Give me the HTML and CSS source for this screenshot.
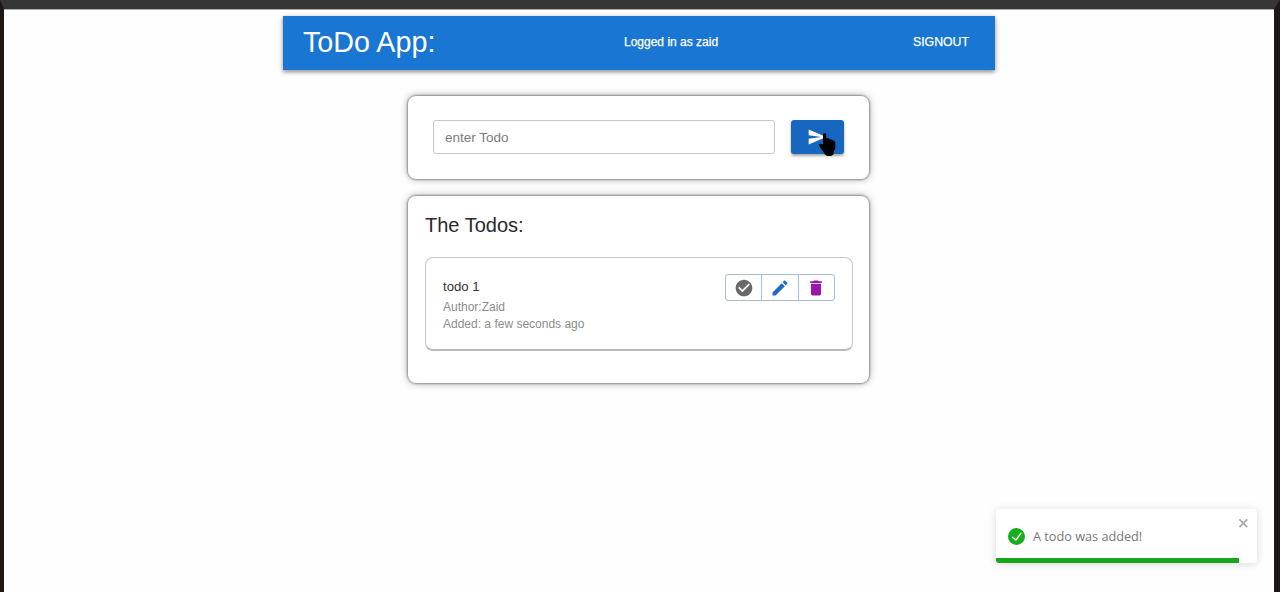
FILE: index.html
```html
<!DOCTYPE html>
<html lang="en">
<head>
<meta charset="utf-8">
<title>ToDo App</title>
<link rel="stylesheet" href="styles.css">
</head>
<body>
<div class="page">
  <header class="appbar">
    <h1 class="brand">ToDo App:</h1>
    <span class="user">Logged in as zaid</span>
    <button class="signout">SIGNOUT</button>
  </header>
  <main class="content">
    <form class="panel entry">
      <input class="field" type="text" placeholder="enter Todo">
      <button class="send" type="button" aria-label="Add">
        <svg class="send-icon" viewBox="0 0 24 24"><path d="M2 21 23 12 2 3v7l15 2-15 2z"/></svg>
        <svg class="pointer" viewBox="0 0 17 23"><path d="M4 1.500C4.300-.3 7-.3 7.200 1.500V5l2 .2 1.500 1 2 .2 1.300 1.200 1.500.5.8 1.400v6l-1.600 3v2.500L12.500 23H8l-2-1.500L4.500 19 1 14.500 0 12c.5-1.500 2.500-1.500 4-.3z"/></svg>
      </button>
    </form>
    <section class="panel list">
      <h2 class="heading">The Todos:</h2>
      <article class="todo">
        <div class="info">
          <div class="title">todo 1</div>
          <div class="meta">Author:Zaid</div>
          <div class="meta">Added: a few seconds ago</div>
        </div>
        <div class="actions">
          <button class="action done" aria-label="Done"><svg viewBox="0 0 24 24"><path d="M12 2C6.480 2 2 6.480 2 12s4.480 10 10 10 10-4.480 10-10S17.520 2 12 2zm-2 15-5-5 1.410-1.410L10 14.170l7.590-7.590L19 8l-9 9z"/></svg></button>
          <button class="action edit" aria-label="Edit"><svg viewBox="0 0 24 24"><path d="M3 17.250V21h3.750L17.810 9.940l-3.750-3.750L3 17.250zM20.710 7.040c.39-.39.39-1.020 0-1.410l-2.340-2.340c-.39-.39-1.020-.39-1.410 0l-1.830 1.830 3.750 3.750 1.830-1.830z"/></svg></button>
          <button class="action remove" aria-label="Delete"><svg viewBox="0 0 24 24"><path d="M6 19c0 1.100.9 2 2 2h8c1.100 0 2-.9 2-2V7H6v12zM19 4h-3.500l-1-1h-5l-1 1H5v2h14V4z"/></svg></button>
        </div>
      </article>
    </section>
  </main>
  <aside class="toast">
    <svg class="toast-icon" viewBox="0 0 24 24"><path d="M12 0a12 12 0 1012 12A12.014 12.014 0 0012 0zm6.927 8.200l-6.845 9.289a1.011 1.011 0 01-1.430.188l-4.888-3.908a1 1 0 111.250-1.562l4.076 3.261 6.227-8.451a1 1 0 111.610 1.183z"/></svg>
    <span class="toast-text">A todo was added!</span>
    <svg class="close" viewBox="0 0 14 16"><path d="M7.710 8.230l3.750 3.750-1.480 1.480-3.750-3.750-3.750 3.750L1 11.980l3.750-3.750L1 4.480 2.480 3l3.750 3.750L9.980 3l1.480 1.480-3.750 3.750z"/></svg>
    <div class="progress"></div>
  </aside>
</div>
</body>
</html>
```
FILE: styles.css
```css
* { box-sizing: border-box; }
body {
  margin: 0;
  background: #fefefe;
  font-family: "Liberation Sans", Arial, sans-serif;
}
button { font-family: inherit; cursor: pointer; }
.page {
  position: relative;
  height: 592px;
  overflow: hidden;
  border-top: 9px solid #363636;
  border-left: 4px solid #1e1815;
  border-right: 6px solid #1e1617;
  box-shadow: inset 0 1px 0 #aaa;
  padding-top: 7px;
}
.appbar {
  display: flex;
  align-items: center;
  width: 712px;
  height: 54px;
  margin-left: 279px;
  padding: 0 26px 2px 20px;
  background: #1976d2;
  color: #fff;
  box-shadow: 0 2px 4px rgba(0,0,0,.35), 0 1px 6px rgba(0,0,0,.15);
}
.brand { width: 321px; margin: 0; font-size: 28.700px; font-weight: 400; white-space: nowrap; }
.user { font-size: 12px; -webkit-text-stroke: .25px #fff; }
.signout { margin-left: auto; padding: 0; border: 0; background: none; color: #fff; font-size: 12.300px; -webkit-text-stroke: .25px #fff; }
.content {
  display: flex;
  flex-direction: column;
  gap: 17px;
  width: 461px;
  margin: 26px 0 0 404px;
}
.panel {
  background: #fff;
  border-radius: 8px;
  box-shadow: 0 0 2px 1px rgba(0,0,0,.34), 0 0 9px rgba(0,0,0,.32);
}
.entry { display: flex; gap: 16px; height: 83px; padding: 24px 25px; }
.field {
  width: 342px;
  height: 34px;
  padding: 0 11px;
  border: 1px solid #c8c8c8;
  border-radius: 3px;
  font: 13.500px "Liberation Sans", Arial, sans-serif;
}
.field::placeholder { color: #7c7c80; }
.send {
  position: relative;
  width: 53px;
  height: 34px;
  padding: 0;
  border: 0;
  border-radius: 3px;
  background: #1766c0;
  box-shadow: 0 2px 3px rgba(0,0,0,.35);
}
.send-icon { display: block; width: 20px; height: 20px; margin-left: 16px; fill: #fff; }
.pointer { position: absolute; left: 28px; top: 13px; width: 17px; height: 23px; fill: #000; }
.list { height: 187px; padding: 17px 16px 0 17px; }
.heading { margin: 0; color: #29292d; font-size: 20px; line-height: 24px; font-weight: 400; }
.todo {
  display: flex;
  justify-content: space-between;
  height: 94px;
  margin-top: 20px;
  padding: 16px 17px 0;
  border: 1px solid #c6c6c6;
  border-bottom: 2px solid #b9b9b9;
  border-radius: 8px;
}
.title { margin-top: 4px; color: #333; font-size: 13.200px; line-height: 17px; }
.meta { color: #8c8c8c; font-size: 12px; line-height: 17px; }
.title + .meta { margin-top: 4px; }
.actions { display: flex; width: 110px; height: 27px; border: 1px solid #a9bccb; border-radius: 3px; }
.action { display: flex; flex: 1; align-items: center; justify-content: center; padding: 0; border: 0; background: none; }
.action + .action { border-left: 1px solid #9cc4e0; }
.action svg { width: 20px; height: 20px; }
.done { fill: #696969; }
.edit { fill: #1b6cc2; }
.remove { fill: #9916a8; }
.toast {
  position: absolute;
  left: 992px;
  top: 500px;
  display: flex;
  align-items: center;
  width: 261px;
  height: 54px;
  padding-left: 12px;
  border-radius: 3px;
  background: #fff;
  box-shadow: 0 1px 8px rgba(0,0,0,.15);
}
.toast-icon { width: 17px; height: 17px; fill: #17ad1d; }
.toast-text { margin-left: 8px; color: #777; font: 12.700px "Open Sans", "Noto Sans", sans-serif; }
.close { position: absolute; right: 7px; top: 7px; width: 12px; height: 14px; fill: #aaa; }
.progress { position: absolute; left: 0; bottom: 0; width: 243px; height: 5px; border-radius: 0 0 0 3px; background: #16a51c; }
```
